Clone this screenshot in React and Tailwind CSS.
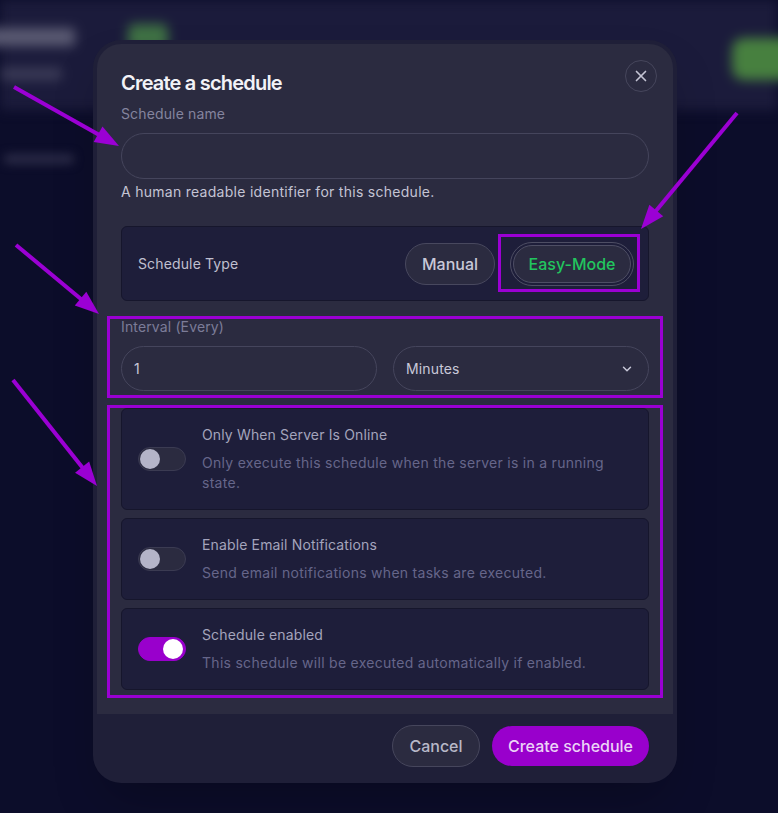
import { ChevronDown, X } from 'lucide-react';

// annotation arrows drawn over the page: [startX, startY, tipX, tipY]
const arrows = [
  [14, 87, 119, 146],
  [737, 113, 641, 229],
  [16, 245, 99, 314],
  [13, 380, 97, 486],
];

const Arrow = ({ a }) => {
  const [x1, y1, x2, y2] = a;
  const len = Math.hypot(x2 - x1, y2 - y1);
  const ux = (x2 - x1) / len;
  const uy = (y2 - y1) / len;
  const head = 24;
  const half = 9;
  const bx = x2 - ux * head;
  const by = y2 - uy * head;
  const pts = `${x2},${y2} ${bx - uy * half},${by + ux * half} ${bx + uy * half},${by - ux * half}`;
  return (
    <g>
      <line x1={x1} y1={y1} x2={bx + ux * 4} y2={by + uy * 4} stroke="#9b00d4" strokeWidth="4" />
      <polygon points={pts} fill="#9b00d4" />
    </g>
  );
};

const Toggle = ({ on }) => (
  <div
    className={`relative h-6 w-12 shrink-0 rounded-full border ${
      on ? 'border-[#9900cc] bg-[#9900cc]' : 'border-[#3b3b52] bg-[#2b2b40]'
    }`}
  >
    <div
      className={`absolute top-[1px] h-5 w-5 rounded-full ${
        on ? 'right-[2px] bg-white' : 'left-[1px] bg-[#b4b4c8]'
      }`}
    />
  </div>
);

const options = [
  {
    title: 'Only When Server Is Online',
    desc: 'Only execute this schedule when the server is in a running state.',
    on: false,
  },
  {
    title: 'Enable Email Notifications',
    desc: 'Send email notifications when tasks are executed.',
    on: false,
  },
  {
    title: 'Schedule enabled',
    desc: 'This schedule will be executed automatically if enabled.',
    on: true,
  },
];

export default function App() {
  return (
    <div className="relative h-[813px] w-[778px] overflow-hidden bg-[#0c0d2a] [font-family:Inter,'Noto_Sans',sans-serif]">
      {/* blurred page behind the dialog */}
      <div className="relative h-[110px] bg-[#1b1b3b] blur-[6px]">
        <div className="absolute left-[-20px] top-[28px] h-[18px] w-[95px] rounded bg-[#5a5a72]" />
        <div className="absolute left-[128px] top-[24px] h-[26px] w-[40px] rounded-md bg-[#3f7144]" />
        <div className="absolute left-0 top-[68px] h-[12px] w-[62px] rounded bg-[#3c3c58]" />
        <div className="absolute left-[732px] top-[38px] h-[42px] w-[70px] rounded-xl bg-[#47803f]" />
      </div>
      <div className="ml-[4px] mt-[44px] h-[10px] w-[70px] rounded bg-[#2a2a46] blur-[5px]" />

      {/* dialog */}
      <div className="absolute left-[93px] top-[40px] flex h-[743px] w-[584px] flex-col rounded-[28px] bg-[#1f1f38] p-[4px] shadow-2xl">
        <div className="relative rounded-t-[24px] bg-[#2b2b40] px-6 pb-6 pt-[25px]">
          <button className="absolute right-4 top-4 flex h-8 w-8 items-center justify-center rounded-full border border-[#46465c] text-[#c4c4d4]">
            <X size={18} strokeWidth={2.2} />
          </button>
          <h2 className="text-[20px] font-semibold leading-7 tracking-[-0.04em] text-[#f2f2f7]">Create a schedule</h2>

          <label className="mt-[7px] block text-sm leading-5 tracking-[0.01em] text-[#84849e]">Schedule name</label>
          <input className="mt-[9px] block h-[46px] w-full rounded-full border border-[#45455c] bg-transparent px-4 text-[#d0d0dc] outline-none" />
          <p className="mt-[3px] text-sm leading-5 tracking-[0.02em] text-[#c4c4d4]">
            A human readable identifier for this schedule.
          </p>

          <div className="mt-6 flex h-[75px] items-center justify-between rounded-md border border-[#16162c] bg-[#1e1e3a] pl-4 pr-[14px]">
            <span className="text-sm tracking-[0.01em] text-[#c0c0d0]">Schedule Type</span>
            <div className="flex items-center gap-[15px]">
              <button className="h-[42px] w-[90px] rounded-full border border-[#48485e] bg-[#2b2b40] text-base font-medium text-[#c8c8d8]">
                Manual
              </button>
              <span className="rounded-full border border-[#4e4e64] p-[2px]">
                <button className="h-[38px] w-[118px] rounded-full border border-[#4e4e64] bg-[#2b2b40] text-base font-medium text-[#22c55e]">
                  Easy-Mode
                </button>
              </span>
            </div>
          </div>

          <label className="mt-4 block text-sm leading-5 tracking-[0.01em] text-[#7c7c98]">Interval (Every)</label>
          <div className="mt-[9px] grid grid-cols-2 gap-4">
            <div className="flex h-[45px] items-center rounded-full border border-[#45455c] px-[12px] text-sm text-[#c8c8d8]">
              1
            </div>
            <div className="flex h-[45px] items-center justify-between rounded-full border border-[#45455c] pl-[12px] pr-[14px] text-sm tracking-[0.01em] text-[#c8c8d8]">
              <span>Minutes</span>
              <ChevronDown size={14} strokeWidth={2.5} />
            </div>
          </div>

          <div className="mt-[17px] flex flex-col gap-2">
            {options.map((o) => (
              <div
                key={o.title}
                className="flex items-center gap-4 rounded-md border border-[#16162c] bg-[#1e1e3a] p-4"
              >
                <Toggle on={o.on} />
                <div className="pr-[14px]">
                  <div className="text-sm leading-5 tracking-[0.01em] text-[#a4a4bc]">{o.title}</div>
                  <div className="mt-2 text-sm leading-5 tracking-[0.02em] text-[#66668a]">{o.desc}</div>
                </div>
              </div>
            ))}
          </div>
        </div>

        <div className="flex flex-1 items-center justify-end gap-3 px-6 pb-[1px]">
          <button className="h-[42px] w-[88px] rounded-full border border-[#46465c] bg-[#2b2b40] text-base font-medium text-[#b8b8c8]">
            Cancel
          </button>
          <button className="h-[40px] w-[157px] rounded-full bg-[#9900cc] text-base font-medium text-[#ecd4f7]">
            Create schedule
          </button>
        </div>
      </div>

      {/* annotations */}
      <svg className="pointer-events-none absolute inset-0" width="778" height="813">
        <rect x="499.5" y="235.5" width="139" height="55" fill="none" stroke="#9b00d4" strokeWidth="3" />
        <rect x="108.5" y="317.5" width="553" height="79" fill="none" stroke="#9b00d4" strokeWidth="3" />
        <rect x="108.5" y="406.5" width="553" height="290" fill="none" stroke="#9b00d4" strokeWidth="3" />
        {arrows.map((a, i) => (
          <Arrow key={i} a={a} />
        ))}
      </svg>
    </div>
  );
}
